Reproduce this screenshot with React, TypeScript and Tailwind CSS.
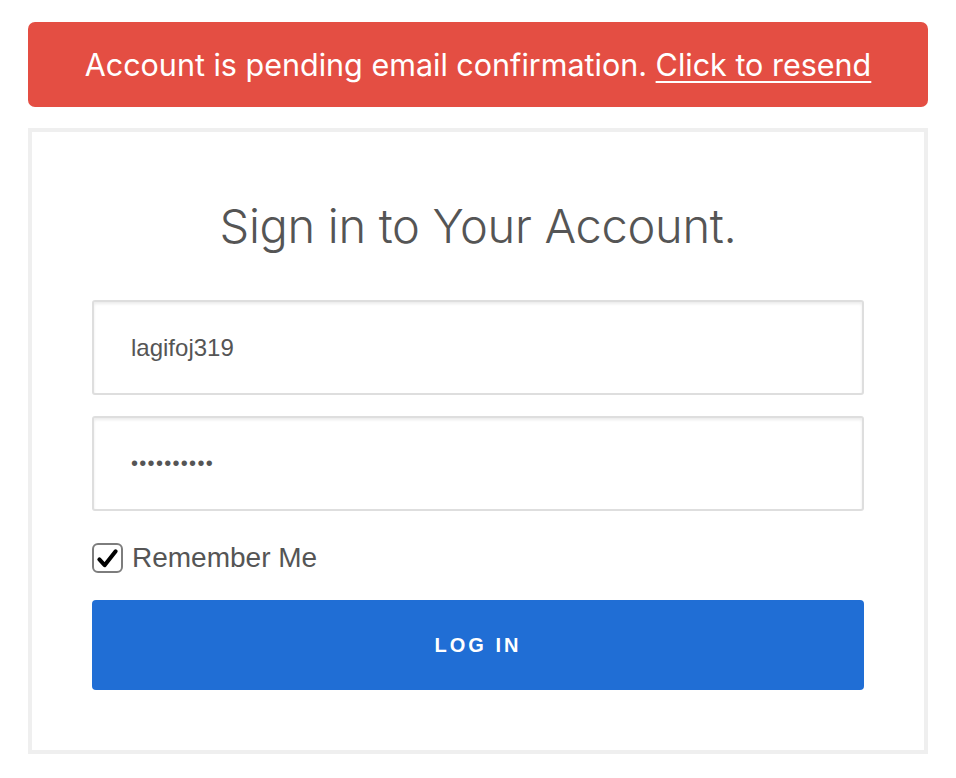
import { useState } from "react";

export default function App() {
  const [remember, setRemember] = useState(true);

  return (
    <div className="min-h-screen bg-white px-[28px] pt-[22px] font-['Liberation_Sans',Arial,sans-serif]">
      {/* Alert */}
      <div className="flex h-[85px] w-[900px] items-center justify-center rounded-[7px] bg-[#e44e43] font-['Inter',sans-serif] text-[30.5px] text-white">
        <p>
          Account is pending email confirmation.{" "}
          <a href="#" className="underline underline-offset-[5px] decoration-2">
            Click to resend
          </a>
        </p>
      </div>

      {/* Card */}
      <div className="mt-[21px] w-[900px] border-4 border-[#efefef] px-[60px] pt-[62px] pb-[60px]">
        <h1 className="text-center text-[47px] leading-[64px] font-light text-[#555] tracking-[-0.3px] font-['Inter',sans-serif]">
          Sign in to Your Account.
        </h1>

        <form className="mt-[42px] flex flex-col">
          <input
            readOnly
            value="lagifoj319"
            className="h-[95px] w-full rounded-[3px] border-2 border-[#dedede] px-[37px] text-[24px] text-[#555] shadow-[inset_0_2px_3px_rgba(0,0,0,0.08)] outline-none"
          />
          <input
            readOnly
            type="password"
            value="abcdefghij"
            className="mt-[21px] h-[95px] w-full rounded-[3px] border-2 border-[#dedede] px-[37px] text-[20px] tracking-[1.3px] text-[#555] shadow-[inset_0_2px_3px_rgba(0,0,0,0.08)] outline-none"
          />

          <label className="mt-[32px] flex h-[30px] items-center gap-[9px] cursor-pointer select-none">
            <span
              onClick={() => setRemember((v) => !v)}
              className="flex h-[30px] w-[31px] items-center justify-center rounded-[6px] border-2 border-[#7d7d7d] bg-white"
            >
              {remember && (
                <svg viewBox="0 0 24 24" className="h-[23px] w-[23px]">
                  <path
                    d="M3.5 13 L9 19 L20.5 4.5"
                    fill="none"
                    stroke="#000"
                    strokeWidth="4.2"
                    strokeLinecap="round"
                    strokeLinejoin="round"
                  />
                </svg>
              )}
            </span>
            <span className="text-[28px] text-[#555]">Remember Me</span>
          </label>

          <button
            type="button"
            className="mt-[27px] h-[90px] w-full rounded-[4px] bg-[#206ed5] text-[20px] font-bold tracking-[3px] text-white"
          >
            LOG IN
          </button>
        </form>
      </div>
    </div>
  );
}
